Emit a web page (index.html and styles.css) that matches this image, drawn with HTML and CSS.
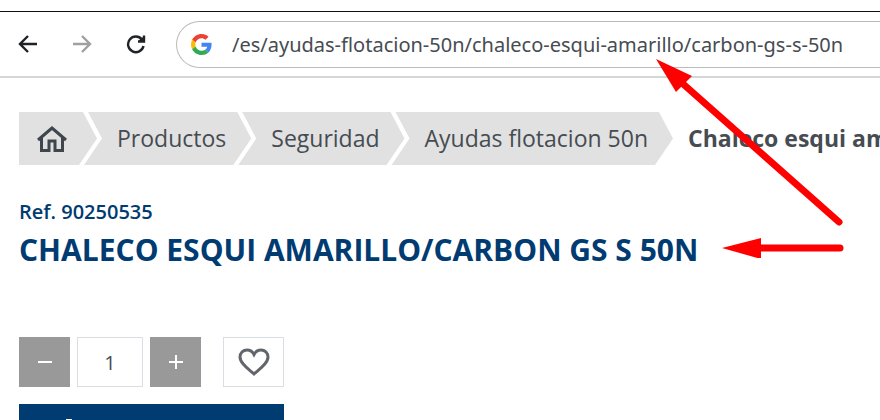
FILE: index.html
```html
<!DOCTYPE html>
<html lang="es">
  <head>
    <meta charset="UTF-8" />
    <meta name="viewport" content="width=device-width, initial-scale=1.0" />
    <title>Chaleco esqui amarillo/carbon GS S 50N</title>
    <link rel="stylesheet" href="styles.css">
  </head>
  <body>
    <header class="toolbar">
      <button type="button" class="nav-button" aria-label="Atrás">
        <svg width="20" height="20" viewBox="0 0 20 20"><path d="M19 10H2M10 2L2 10l8 8" /></svg>
      </button>
      <button type="button" class="nav-button forward" aria-label="Adelante">
        <svg width="20" height="20" viewBox="0 0 20 20"><path d="M1 10h17M10 2l8 8-8 8" /></svg>
      </button>
      <button type="button" class="nav-button" aria-label="Recargar">
        <svg width="20" height="20" viewBox="0 0 20 20"><path d="M17.500 12a7.800 7.800 0 1 1-1.500-6.500L18 7.500M18 1.500v6h-6M17 4l-3 3" /></svg>
      </button>
      <div class="address">
        <svg class="google" width="21" height="21" viewBox="0 0 48 48">
          <path fill="#ea4335" d="M24 9.500c3.540 0 6.710 1.220 9.210 3.600l6.850-6.850C35.900 2.380 30.470 0 24 0 14.620 0 6.510 5.380 2.560 13.220l7.980 6.190C12.430 13.720 17.740 9.500 24 9.500z" />
          <path fill="#4285f4" d="M46.980 24.550c0-1.570-.150-3.090-.380-4.550H24v9.020h12.940c-.580 2.960-2.260 5.480-4.780 7.180l7.730 6c4.510-4.180 7.090-10.360 7.090-17.650z" />
          <path fill="#fbbc05" d="M10.530 28.590c-.480-1.450-.760-2.990-.760-4.590s.270-3.140.760-4.590l-7.980-6.190C.920 16.460 0 20.120 0 24c0 3.880.920 7.540 2.560 10.780l7.970-6.190z" />
          <path fill="#34a853" d="M24 48c6.480 0 11.930-2.130 15.890-5.810l-7.730-6c-2.150 1.450-4.920 2.300-8.160 2.300-6.260 0-11.570-4.220-13.470-9.910l-7.980 6.190C6.510 42.620 14.620 48 24 48z" />
        </svg>
        <input type="text" class="url" aria-label="Dirección" value="/es/ayudas-flotacion-50n/chaleco-esqui-amarillo/carbon-gs-s-50n" />
      </div>
    </header>

    <main class="product">
      <nav class="breadcrumb">
        <a href="#" class="crumb home" aria-label="Inicio">
          <svg width="30" height="26" viewBox="0 0 30 26"><path d="M1 14L15 2l14 12M4.500 11.500v13H12V15h6v9.500h7.500v-13" /></svg>
        </a>
        <a href="#" class="crumb">Productos</a>
        <a href="#" class="crumb">Seguridad</a>
        <a href="#" class="crumb">Ayudas flotacion 50n</a>
        <span class="current">Chaleco esqui amarillo/carbon gs s 50n</span>
      </nav>

      <p class="ref">Ref. 90250535</p>
      <h1 class="title">CHALECO ESQUI AMARILLO/CARBON GS S 50N</h1>

      <form class="buy">
        <div class="quantity">
          <button type="button" class="step" aria-label="Quitar uno">
            <svg width="16" height="16" viewBox="0 0 16 16"><path d="M1 8h14" /></svg>
          </button>
          <input type="text" class="amount" aria-label="Cantidad" value="1" />
          <button type="button" class="step" aria-label="Añadir uno">
            <svg width="16" height="16" viewBox="0 0 16 16"><path d="M1 8h14M8 1v14" /></svg>
          </button>
          <button type="button" class="favorite" aria-label="Favorito">
            <svg width="32" height="28" viewBox="0 0 32 28"><path d="M16 26C11 21.500 2 15.500 2 9c0-4 3-7 7-7 3 0 5.500 1.500 7 4.500C17.500 3.500 20 2 23 2c4 0 7 3 7 7 0 6.500-9 12.500-14 17z" /></svg>
          </button>
        </div>
        <button type="submit" class="cart" aria-label="Añadir al carrito">
          <svg width="28" height="26" viewBox="0 0 28 26"><path d="M1 2h5l4 15h13l4-13H7" /><circle cx="11" cy="22" r="2" /><circle cx="22" cy="22" r="2" /></svg>
        </button>
      </form>
    </main>

    <svg class="arrows" width="190" height="200" viewBox="656 58 190 200">
      <path d="M839 222L682 83M840 248H756" />
      <polygon points="656,59 692,76 676,92" />
      <polygon points="722,248 761,238 761,259" />
    </svg>
  </body>
</html>
```

FILE: styles.css
```css
* {
  box-sizing: border-box;
}
body {
  margin: 0;
  padding-top: 11px;
  font-family: "Open Sans", "Noto Sans", sans-serif;
  background-color: white;
  color: #464c52;
  height: 100vh;
  overflow: hidden;
}
button,
input {
  font-family: inherit;
  color: inherit;
  border: none;
  padding: 0;
  background: none;
}
svg {
  display: block;
  fill: none;
}
.toolbar {
  display: flex;
  align-items: center;
  gap: 34px;
  height: 67px;
  padding-left: 18px;
  border-top: 1px solid #111;
  border-bottom: 2px solid #d3d7d6;
}
.nav-button {
  stroke: #202326;
  stroke-width: 2.4;
}
.nav-button.forward {
  stroke: #a0a0a0;
}
.address {
  display: flex;
  flex: 1;
  align-items: center;
  gap: 20px;
  height: 47px;
  margin-left: -4px;
  padding-left: 14px;
  border: 1px solid #bbb;
  border-right: none;
  border-radius: 24px 0 0 24px;
}
.google {
  flex: none;
}
.url {
  flex: 1;
  min-width: 0;
  font-family: "Noto Sans", sans-serif;
  font-size: 20px;
}
.product {
  padding: 34px 0 0 19px;
}
.breadcrumb {
  display: flex;
  height: 53px;
  line-height: 53px;
  font-size: 23px;
  white-space: nowrap;
  overflow: hidden;
}
.crumb {
  padding: 0 25px 0 33px;
  margin-left: -13px;
  background-color: #e1e1e1;
  color: inherit;
  text-decoration: none;
  clip-path: polygon(4px 0, calc(100% - 14px) 0, 100% 50%, calc(100% - 18px) 100%, 0 100%, 18px 50%);
}
.crumb.home {
  display: flex;
  align-items: center;
  margin-left: 0;
  padding: 0 30px 0 18px;
  stroke: #3f464d;
  stroke-width: 3;
  clip-path: polygon(0 0, calc(100% - 14px) 0, 100% 50%, calc(100% - 18px) 100%, 0 100%);
}
.current {
  padding-left: 15px;
  font-weight: bold;
}
.ref {
  margin: 35px 0 0;
  font-size: 20px;
  line-height: 24px;
  font-weight: 600;
  color: #003b71;
}
.title {
  margin: 6px 0 0;
  font-size: 30px;
  line-height: 40px;
  font-weight: bold;
  color: #003b71;
}
.buy {
  margin-top: 67px;
  width: 265px;
}
.quantity {
  display: flex;
  gap: 7px;
  height: 50px;
}
.step {
  display: flex;
  align-items: center;
  justify-content: center;
  width: 51px;
  background-color: #999;
  stroke: white;
  stroke-width: 2;
}
.amount {
  width: 66px;
  border: 1px solid #d9dee2;
  font-size: 20px;
  text-align: center;
}
.favorite {
  display: flex;
  align-items: center;
  justify-content: center;
  width: 61px;
  margin-left: auto;
  border: 1px solid #d9dee2;
  stroke: #62666b;
  stroke-width: 3;
}
.cart {
  display: block;
  width: 100%;
  height: 54px;
  margin-top: 17px;
  padding: 12px 46px;
  background-color: #003b71;
  stroke: white;
  stroke-width: 2;
}
.arrows {
  position: absolute;
  top: 58px;
  left: 656px;
  fill: red;
}
.arrows path {
  stroke: red;
  stroke-width: 7;
  stroke-linecap: round;
}
```
